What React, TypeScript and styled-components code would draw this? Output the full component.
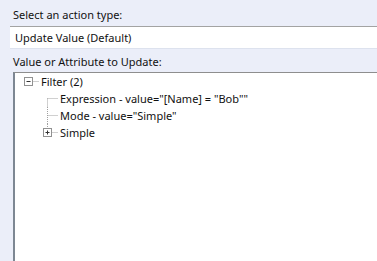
import { createGlobalStyle, styled } from 'styled-components';

const GlobalStyle = createGlobalStyle`
    html, body, #root {
        margin: 0;
        height: 100%;
    }
    body {
        background: #ebeef9;
        font-family: "Noto Sans", "Open Sans", sans-serif;
        font-size: 11px;
        color: #111;
        overflow: hidden;
    }
`

const Panel = styled.div`
    display: flex;
    flex-direction: column;
    height: 100%;
    padding-left: 10px;
    box-sizing: border-box;
`
const FieldLabel = styled.div<{ $height: number }>`
    height: ${p => p.$height}px;
    display: flex;
    align-items: center;
    padding-left: 3px;
    padding-top: 2px;
    box-sizing: border-box;
`
const ActionSelect = styled.div`
    height: 21px;
    display: flex;
    align-items: center;
    padding-left: 5px;
    background: #fff;
    border-top: 1px solid #a3a3a3;
    border-bottom: 1px solid #dde2ee;
`
const TreeBox = styled.div`
    flex: 1;
    margin-left: 3px;
    background: #fff;
    border-top: 1px solid #8e8e8e;
    border-left: 2px solid #7d8793;
`
const Row = styled.div<{ $depth: number }>`
    height: 17px;
    display: flex;
    align-items: center;
    padding-left: ${p => p.$depth * 19}px;
`
const Text = styled.span`
    white-space: nowrap;
    padding-left: 1px;
`

type Kind = 'open' | 'closed' | 'leaf';
type Line = 'none' | 'first' | 'mid' | 'last';

const Connector: React.FC<{ kind: Kind, line: Line }> = ({ kind, line }) => {
    const cx = 13.5;
    const cy = 8.5;
    const y1 = line === 'first' ? cy : 0;
    const y2 = line === 'last' ? cy : 17;
    return (
        <svg width="25" height="17" viewBox="0 0 25 17">
            {line !== 'none' && (
                <line x1={cx} y1={y1} x2={cx} y2={y2} stroke="#a0a0a0" strokeDasharray="1 1" />
            )}
            {kind === 'leaf' ? (
                <line x1={cx} y1={cy} x2="24" y2={cy} stroke="#a0a0a0" strokeDasharray="1 1" />
            ) : (
                <>
                    <line x1={cx + 5} y1={cy} x2="24" y2={cy} stroke="#a0a0a0" strokeDasharray="1 1" />
                    <rect x={cx - 4} y={cy - 4} width="8" height="8" fill="#fff" stroke="#919191" />
                    <line x1={cx - 2} y1={cy} x2={cx + 2} y2={cy} stroke="#333" />
                    {kind === 'closed' && (
                        <line x1={cx} y1={cy - 2} x2={cx} y2={cy + 2} stroke="#333" />
                    )}
                </>
            )}
        </svg>
    );
}

const nodes: { depth: number, kind: Kind, line: Line, label: string }[] = [
    { depth: 0, kind: 'open', line: 'none', label: 'Filter (2)' },
    { depth: 1, kind: 'leaf', line: 'first', label: 'Expression - value="[Name] = "Bob""' },
    { depth: 1, kind: 'leaf', line: 'mid', label: 'Mode - value="Simple"' },
    { depth: 1, kind: 'closed', line: 'last', label: 'Simple' },
];

const App: React.FC = () => {
    return (
        <>
            <GlobalStyle />
            <Panel>
                <FieldLabel $height={26}>Select an action type:</FieldLabel>
                <ActionSelect>Update Value (Default)</ActionSelect>
                <FieldLabel $height={23}>Value or Attribute to Update:</FieldLabel>
                <TreeBox>
                    {nodes.map((n, i) => (
                        <Row key={i} $depth={n.depth}>
                            <Connector kind={n.kind} line={n.line} />
                            <Text>{n.label}</Text>
                        </Row>
                    ))}
                </TreeBox>
            </Panel>
        </>
    );
}

export default App;
